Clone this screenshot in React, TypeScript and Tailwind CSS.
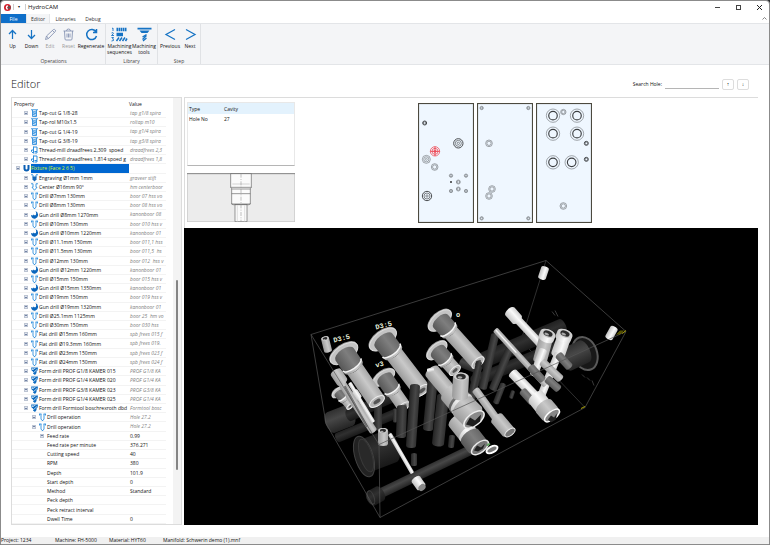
"use client";

import { useState } from "react";
import type { ReactNode } from "react";

type IconKind =
  | "tap"
  | "mill"
  | "fixture"
  | "engrave"
  | "center"
  | "drill"
  | "gun"
  | "form"
  | "none";

interface TreeRow {
  level: number;
  label: string;
  value: string;
  icon: IconKind;
  state?: "open" | "closed";
}

const op = (icon: IconKind, label: string, value: string): TreeRow => ({
  level: 1,
  icon,
  label,
  value,
  state: "closed",
});

const param = (label: string, value: string): TreeRow => ({
  level: 3,
  icon: "none",
  label,
  value,
});

const rows: TreeRow[] = [
  op("tap", "Tap-cut G 1/8-28", "tap g1/8 spira"),
  op("tap", "Tap-rol M10x1.5", "roltap m10"),
  op("tap", "Tap-cut G 1/4-19", "tap g1/4 spira"),
  op("tap", "Tap-cut G 3/8-19", "tap g3/8 spira"),
  op("mill", "Thread-mill draadfrees 2,309  spoed", "draadfrees 2,3"),
  op("mill", "Thread-mill draadfrees 1,814 spoed g", "draadfrees 1,8"),
  { level: 0, icon: "fixture", label: "Fixture (Face 2 6 5)", value: "", state: "open" },
  op("engrave", "Engraving Ø1mm 1mm", "graveer stift"),
  op("center", "Center Ø16mm 90°", "hm centerboor"),
  op("drill", "Drill Ø7mm 130mm", "boor 07 hss vo"),
  op("drill", "Drill Ø8mm 130mm", "boor 08 hss vo"),
  op("gun", "Gun drill Ø8mm 1270mm", "kanonboor 08"),
  op("drill", "Drill Ø10mm 130mm", "boor 010 hss v"),
  op("gun", "Gun drill Ø10mm 1220mm", "kanonboor 01"),
  op("drill", "Drill Ø11.1mm 150mm", "boor 011,1 hss"),
  op("drill", "Drill Ø11.5mm 130mm", "boor 011,5  hs"),
  op("drill", "Drill Ø12mm 130mm", "boor 012  hss v"),
  op("gun", "Gun drill Ø12mm 1220mm", "kanonboor 01"),
  op("drill", "Drill Ø15mm 150mm", "boor 015 hss v"),
  op("gun", "Gun drill Ø15mm 1350mm", "kanonboor 01"),
  op("drill", "Drill Ø19mm 150mm", "boor 019 hss v"),
  op("gun", "Gun drill Ø19mm 1320mm", "kanonboor 01"),
  op("drill", "Drill Ø25.1mm 1125mm", "boor 25  hm vo"),
  op("drill", "Drill Ø30mm 150mm", "boor 030 hss"),
  op("drill", "Flat drill Ø15mm 160mm", "spb frees 015 f"),
  op("drill", "Flat drill Ø19.3mm 160mm", "spb frees 019."),
  op("drill", "Flat drill Ø23mm 150mm", "spb frees 023 f"),
  op("drill", "Flat drill Ø24mm 150mm", "spb frees 024 f"),
  op("form", "Form drill PROF G1/8 KAMER 015", "PROF G1/8 KA"),
  op("form", "Form drill PROF G1/4 KAMER 020", "PROF G1/4 KA"),
  op("form", "Form drill PROF G3/8 KAMER 023", "PROF G3/8 KA"),
  op("form", "Form drill PROF G1/4 KAMER 025", "PROF G1/4 KA"),
  { level: 1, icon: "form", label: "Form drill Formtool boschrexroth dbd", value: "Formtool bosc", state: "open" },
  { level: 2, icon: "drill", label: "Drill operation", value: "Hole 27.2", state: "closed" },
  { level: 2, icon: "drill", label: "Drill operation", value: "Hole 27.2", state: "open" },
  { level: 3, icon: "none", label: "Feed rate", value: "0.99", state: "closed" },
  param("Feed rate per minute", "376.271"),
  param("Cutting speed", "40"),
  param("RPM", "380"),
  param("Depth", "101.9"),
  param("Start depth", "0"),
  param("Method", "Standard"),
  param("Peck depth", ""),
  param("Peck retract interval", ""),
  param("Dwell Time", "0"),
];

const indents = ["pl-[4px]", "pl-[12px]", "pl-[20px]", "pl-[28px]"];

function ToolIcon({ kind }: { kind: IconKind }) {
  if (kind === "none") return null;
  return (
    <svg viewBox="0 0 14 16" className="mr-px h-2 w-[7px] shrink-0" fill="none" stroke="#2f8fdc" strokeWidth="1.8">
      {kind === "drill" && <path d="M0 2h5M9 2h5M4 2v10l2 3h2l2-3V2M1 2v3M13 2v3" />}
      {kind === "tap" && (
        <>
          <path d="M0 1.5h14M3 2v13h8V2" />
          <path d="M3 5l8 2M3 8l8 2M3 11l8 2M10 4l-6 3M10 8l-6 4" strokeWidth="1.5" />
        </>
      )}
      {kind === "mill" && <path d="M5 1v14M5 2h7v9H7M12 11v3H7M1 11v-3h3M1 11l3 3" strokeWidth="2" />}
      {kind === "fixture" && <path d="M3 2v7a4 4 0 0 0 8 0V2" stroke="#0a5fb4" strokeWidth="4" />}
      {kind === "engrave" && (
        <>
          <path d="M0 1.5h4M10 1.5h4M4 2v5M10 2v5" />
          <path d="M3 5h8v6l-4 4-4-4z" fill="#1669b8" stroke="none" />
        </>
      )}
      {kind === "center" && <path d="M0 1.500h4v7H2l5 6 5-6h-2v-7h4" />}
      {kind === "gun" && (
        <path d="M9 0a8 8 0 0 1 5 8 7 7 0 0 1-13 4l-1-4 4 1 1-2 3 2c3-2 3-5 1-9z" fill="#0a66bd" stroke="none" />
      )}
      {kind === "form" && (
        <>
          <path d="M0 1h14l-1 6-2 2v3l-3 4-4-3V9L1 7z" fill="#0f6cc0" stroke="none" />
          <path d="M1 6l8-4M4 12l8-7M1 2l4 3" stroke="#fff" strokeWidth="1.3" />
        </>
      )}
    </svg>
  );
}

function PropertyTree() {
  const [selected, setSelected] = useState(6);

  return (
    <section className="flex w-[171px] shrink-0 border border-[#dcdcdc]">
      <table className="flex min-w-0 flex-1 flex-col">
        <thead className="block">
          <tr className="flex h-[11px] items-center text-left">
            <th className="w-[117px] pl-[2px] font-normal">Property</th>
            <th className="font-normal">Value</th>
          </tr>
        </thead>
        <tbody className="flex flex-1 flex-col">
          {rows.map((row, i) => (
            <tr key={i} className="flex min-h-[9px] flex-1 items-stretch" onClick={() => setSelected(i)}>
              <td className={`flex w-[117px] items-center overflow-hidden border-b border-[#f3f3f3] ${indents[row.level]}`}>
                {row.state ? (
                  <button
                    aria-label={row.state === "open" ? "Collapse" : "Expand"}
                    className="mr-[3px] flex h-1 w-1 shrink-0 items-center justify-center border border-[#bcc4d2] bg-[#dfe4ee]"
                  >
                    <span className="h-px w-[2px] bg-[#7283a5]" />
                  </button>
                ) : (
                  <span className="mr-[3px] w-1 shrink-0" />
                )}
                <ToolIcon kind={row.icon} />
                <span
                  className={
                    selected === i
                      ? "flex-1 self-stretch bg-[#0067d0] leading-[9px] whitespace-pre text-[#d2f52c]"
                      : "flex-1 whitespace-pre"
                  }
                >
                  {row.label}
                </span>
              </td>
              <td
                className={`min-w-0 flex-1 overflow-hidden border-b border-[#f3f3f3] pl-[1px] whitespace-pre ${
                  row.level === 3 ? "" : "text-[#808080] italic"
                }`}
              >
                {row.value}
              </td>
            </tr>
          ))}
        </tbody>
      </table>
      <div className="ml-[7px] flex w-2 flex-col items-center bg-[#f3f3f3]">
        <span className="h-[182px] shrink-0" />
        <span className="h-[190px] w-[2px] rounded bg-[#858585]" />
      </div>
    </section>
  );
}

interface RibbonItem {
  label: string;
  width: string;
  muted?: boolean;
  icon: ReactNode;
}

const operations: RibbonItem[] = [
  { label: "Up", width: "w-[19px]", icon: <path d="M13 22V5M6 12l7-7 7 7" /> },
  { label: "Down", width: "w-[19px]", icon: <path d="M13 4v17M6 14l7 7 7-7" /> },
  {
    label: "Edit",
    width: "w-[18px]",
    muted: true,
    icon: <path d="M3 23l2-7L19 3q2-1 3.500 1t0 3L9 21zM5 16l4 5M17 5l4 4" strokeWidth="1.800" />,
  },
  {
    label: "Reset",
    width: "w-[19px]",
    muted: true,
    icon: <path d="M3 6h20M9 6q0-4 4-4t4 4M5 6l1 16q0 2 2 2h10q2 0 2-2l1-16M10 11v8M13 11v8M16 11v8" strokeWidth="1.800" />,
  },
  {
    label: "Regenerate",
    width: "w-[26px]",
    icon: <path d="M22 8a10 10 0 1 0 1 8M23 2v7h-7" strokeWidth="3" />,
  },
];

const library: RibbonItem[] = [
  {
    label: "Machining sequences",
    width: "w-[25px]",
    icon: (
      <>
        <path d="M-2 1l2-1v6M-3 10q4-2 4 1l-4 4h5M-3 19h4l-2 3q3 0 2 3l-4 1" strokeWidth="1.8" />
        <path d="M7 3h21" strokeWidth="7" strokeDasharray="3 1" />
        <path d="M7 13h13" strokeWidth="7" />
        <path d="M7 26l5-7M13 26l5-7M19 26l5-7M25 26l3-5" strokeWidth="3" />
      </>
    ),
  },
  {
    label: "Machining tools",
    width: "w-[24px]",
    icon: (
      <>
        <path d="M-1 1h28" strokeWidth="3.500" />
        <path d="M3 5h20l-4 5H7z" fill="#1673c4" stroke="none" />
        <path d="M9 18l8-5M9 23l8-8M10 26l7-6" strokeWidth="2.5" />
      </>
    ),
  },
];

const steps: RibbonItem[] = [
  { label: "Previous", width: "w-[22px]", icon: <path d="M22 3L4 13l18 10" /> },
  { label: "Next", width: "w-[18px]", icon: <path d="M4 3l18 10L4 23" /> },
];

function RibbonGroup({ title, items }: { title: string; items: RibbonItem[] }) {
  return (
    <div className="flex flex-col justify-between border-r border-[#e0e2e5] px-[1px] pt-1">
      <div className="flex">
        {items.map((item) => (
          <button key={item.label} className={`flex flex-col items-center gap-[2px] ${item.width}`}>
            <svg
              viewBox="0 0 26 26"
              className="h-[13px] w-[13px] overflow-visible"
              fill="none"
              stroke={item.muted ? "#8794b3" : "#1673c4"}
              strokeWidth="2.5"
            >
              {item.icon}
            </svg>
            <span className={`text-center leading-[6px] ${item.muted ? "text-[#999]" : ""}`}>{item.label}</span>
          </button>
        ))}
      </div>
      <span className="text-center leading-[6px] text-[#444]">{title}</span>
    </div>
  );
}

interface Hole {
  x: number;
  y: number;
  r: number;
  kind?: "dark" | "big" | "red" | "dot";
}

const faces: Hole[][] = [
  [
    { x: 20, y: 60, r: 6, kind: "dark" },
    { x: 121, y: 121, r: 14, kind: "dark" },
    { x: 51, y: 145, r: 14, kind: "red" },
    { x: 25, y: 169, r: 12 },
    { x: 50, y: 192, r: 10 },
    { x: 27, y: 279, r: 14, kind: "dark" },
    { x: 99, y: 218, r: 5 },
    { x: 144, y: 218, r: 5 },
    { x: 99, y: 237, r: 3, kind: "dot" },
    { x: 121, y: 237, r: 6 },
    { x: 121, y: 258, r: 6 },
    { x: 99, y: 264, r: 5 },
    { x: 144, y: 264, r: 5 },
  ],
  [
    { x: 14, y: 15, r: 5 },
    { x: 154, y: 15, r: 5 },
    { x: 14, y: 346, r: 5 },
    { x: 154, y: 346, r: 5 },
    { x: 36, y: 121, r: 10 },
    { x: 45, y: 258, r: 10 },
    { x: 36, y: 279, r: 10 },
  ],
  [
    { x: 51, y: 38, r: 20, kind: "big" },
    { x: 123, y: 38, r: 20, kind: "big" },
    { x: 82, y: 27, r: 8 },
    { x: 51, y: 92, r: 20, kind: "big" },
    { x: 123, y: 92, r: 20, kind: "big" },
    { x: 151, y: 121, r: 6, kind: "dark" },
    { x: 151, y: 169, r: 6, kind: "dark" },
    { x: 51, y: 178, r: 20, kind: "big" },
    { x: 107, y: 178, r: 20, kind: "big" },
    { x: 82, y: 309, r: 10 },
  ],
];

function Face({ holes }: { holes: Hole[] }) {
  return (
    <svg viewBox="0 0 168 360" className="h-[120px] w-14" fill="none">
      <rect x="1.5" y="1.5" width="165" height="357" fill="#eff7ff" stroke="#4c4a3f" strokeWidth="3.500" />
      {holes.map((h, i) => {
        if (h.kind === "dot") return <circle key={i} cx={h.x} cy={h.y} r={h.r} fill="#333" />;
        const color = h.kind === "red" ? "#ee3340" : h.kind === "dark" ? "#4a4d50" : "#777c80";
        return (
          <g key={i} stroke={color} strokeWidth="1.8">
            <circle cx={h.x} cy={h.y} r={h.r} strokeWidth={h.kind === "dark" ? 3 : 2} />
            <circle cx={h.x} cy={h.y} r={h.r * 0.64} stroke={h.kind === "big" ? "#3c3f42" : color} strokeWidth={h.kind === "big" ? 3.5 : 2} />
            {h.r > 11 && h.kind !== "big" && <circle cx={h.x} cy={h.y} r={h.r * 0.25} />}
            {h.kind === "red" && (
              <path d={`M${h.x - 14} ${h.y}h28M${h.x} ${h.y - 14}v28`} strokeWidth="2.5" />
            )}
          </g>
        );
      })}
    </svg>
  );
}

function HoleProfile() {
  return (
    <svg viewBox="0 0 324 147" className="h-[49px] w-[108px]" fill="none" stroke="#555" strokeWidth="1.8">
      <rect x="1" y="1" width="322" height="145" fill="#ececec" stroke="#c4c4c4" strokeWidth="2" />
      <path d="M0 2h324" stroke="#888" strokeWidth="3" />
      <path d="M131 2h62v41l-3 4v46l-5 2h-46l-5-2V47l-3-4z" fill="#fbfbfb" />
      <path d="M144 95h36v51h-36z" fill="#fbfbfb" />
      <path d="M131 43h62M134 48h56M134 62h56M134 93h56" />
      <path d="M136 33h52" stroke="#bbb" />
      <path d="M162 2v144" stroke="#999" strokeDasharray="12 4 3 4" />
      <path d="M151 97v49M173 97v49" stroke="#ccc" />
    </svg>
  );
}

interface CylProps {
  from: [number, number];
  to: [number, number];
  r: number;
  tone?: "light" | "white" | "mid" | "dim" | "dark";
  cap?: boolean;
}

// Shaded tube running between two points, with an optional open end
function Cyl({ from, to, r, tone = "light", cap = false }: CylProps) {
  const dx = to[0] - from[0];
  const dy = to[1] - from[1];
  const len = Math.hypot(dx, dy);
  const angle = (Math.atan2(dy, dx) * 180) / Math.PI;
  const k = r * 0.5;
  return (
    <g transform={`translate(${from[0]} ${from[1]}) rotate(${angle})`}>
      <path
        d={`M0 ${-r}H${len}A${k} ${r} 0 0 1 ${len} ${r}H0A${k} ${r} 0 0 1 0 ${-r}z`}
        fill={`url(#tone-${tone})`}
      />
      {cap && (
        <>
          <ellipse cx={0} cy={0} rx={k} ry={r * 0.9} fill="#cfcfcf" />
          <ellipse cx={0} cy={0} rx={k * 0.7} ry={r * 0.6} fill="#2b2b2b" />
          <ellipse cx={1} cy={1} rx={k * 0.3} ry={r * 0.3} fill="#aaa" />
        </>
      )}
    </g>
  );
}

// Cavity with a wide flange, a collar, a bright ring and a long bore
function Cavity({ at, ring, end, r }: { at: [number, number]; ring: [number, number]; end: [number, number]; r: number }) {
  const dx = end[0] - at[0];
  const dy = end[1] - at[1];
  const deg = (Math.atan2(dy, dx) * 180) / Math.PI;
  const d = Math.hypot(ring[0] - at[0], ring[1] - at[1]);
  const len = Math.hypot(dx, dy);
  const big = r * 1.22;
  return (
    <g transform={`translate(${at[0]} ${at[1]}) rotate(${deg})`}>
      <ellipse cx="-1" cy="0" rx={r * 0.95} ry={r * 1.8} fill="#9b9b9b" />
      <ellipse cx="0" cy="0" rx={r * 0.9} ry={r * 1.75} fill="#c4c4c4" stroke="#dedede" />
      <path d={`M1 ${-big}H${d}A${r * 0.5} ${big} 0 0 1 ${d} ${big}H1A${r * 0.6} ${big} 0 0 1 1 ${-big}z`} fill="url(#tone-mid)" />
      <path
        d={`M${d} ${-big}A${r * 0.5} ${big} 0 0 1 ${d} ${big}h3A${r * 0.5} ${big} 0 0 0 ${d + 3} ${-big}z`}
        fill="url(#tone-light)"
      />
      <path d={`M${d + 3} ${-r}H${len}A${r * 0.5} ${r} 0 0 1 ${len} ${r}H${d + 3}A${r * 0.5} ${r} 0 0 0 ${d + 3} ${-r}z`} fill="url(#tone-light)" />
      <path d={`M${d} ${-big}A${r * 0.5} ${big} 0 0 1 ${d} ${big}`} fill="none" stroke="#f4f4f4" strokeWidth="1.5" />
      <ellipse cx={len} cy="0" rx={r * 0.45} ry={r * 0.95} fill="#b4b4b4" stroke="#ececec" strokeWidth="1" />
      <ellipse cx={len} cy="0" rx={r * 0.2} ry={r * 0.45} fill="#555" />
    </g>
  );
}

const tones: [string, string, string, string][] = [
  ["light", "#a8a8a8", "#c9c9c9", "#9a9a9a"],
  ["white", "#cfcfcf", "#fafafa", "#c2c2c2"],
  ["mid", "#686868", "#7e7e7e", "#585858"],
  ["dim", "#303030", "#474747", "#242424"],
  ["dark", "#202020", "#303030", "#181818"],
];

function Viewport() {
  return (
    <svg
      viewBox="184 228 574 296"
      preserveAspectRatio="xMidYMid meet"
      className="min-h-0 w-full flex-1 bg-black"
      role="img"
      aria-label="Manifold model"
    >
      <defs>
        {tones.map(([name, a, b, c]) => (
          <linearGradient key={name} id={`tone-${name}`} x1="0" y1="0" x2="0" y2="1">
            <stop offset="0" stopColor={a} />
            <stop offset="0.4" stopColor={b} />
            <stop offset="1" stopColor={c} />
          </linearGradient>
        ))}
      </defs>

      {/* hidden edges of the block */}
      <path d="M546 260L521 340L585 407" fill="none" stroke="#3b3b3b" strokeWidth="0.8" />

      {/* bores deep inside the block */}
      <Cyl from={[478, 362]} to={[562, 326]} r={8} tone="dark" />
      <Cyl from={[474, 381]} to={[556, 347]} r={6} tone="dark" />
      <Cyl from={[338, 437]} to={[396, 413]} r={5} tone="dark" />
      <Cyl from={[331, 422]} to={[349, 415]} r={11} tone="dim" />
      <Cyl from={[349, 415]} to={[392, 396]} r={6} tone="dark" />
      <Cyl from={[364, 456]} to={[390, 446]} r={17} tone="dark" />
      <ellipse cx="364" cy="456" rx="9" ry="21" fill="#222" stroke="#424242" transform="rotate(-17 364 456)" />
      <ellipse cx="366" cy="455" rx="6" ry="17" fill="#292929" stroke="#383838" transform="rotate(-17 366 455)" />
      <Cyl from={[374, 496]} to={[482, 444]} r={5} tone="dim" />
      <Cyl from={[371, 498]} to={[380, 493]} r={8} tone="dark" />
      <ellipse cx="371" cy="497" rx="3" ry="7" fill="none" stroke="#404040" transform="rotate(-20 371 497)" />
      <ellipse cx="585" cy="353" rx="12" ry="17" fill="#181818" stroke="#5a5a5a" strokeWidth="2" transform="rotate(-20 585 353)" />
      <Cyl from={[567, 359]} to={[584, 351]} r={12} tone="dim" />
      <Cyl from={[495, 335]} to={[483, 387]} r={4} tone="dim" />
      <Cyl from={[511, 345]} to={[493, 388]} r={4} tone="dim" />
      <Cyl from={[503, 384]} to={[496, 402]} r={3} tone="dim" />
      <Cyl from={[513, 391]} to={[511, 397]} r={2} tone="dim" />
      <Cyl from={[378, 404]} to={[378, 428]} r={4} tone="dim" />
      <Cyl from={[395, 409]} to={[395, 421]} r={2} tone="dim" />
      <Cyl from={[478, 367]} to={[471, 400]} r={4} tone="dim" />
      <Cyl from={[462, 362]} to={[475, 367]} r={5} tone="dim" />

      {/* left cavities */}
      <Cavity at={[338, 392]} ring={[342, 397]} end={[350, 406]} r={4} />
      <Cavity at={[384, 377]} ring={[392, 388]} end={[404, 406]} r={7} />
      <Cavity at={[383, 339]} ring={[391, 350]} end={[422, 390]} r={9} />
      <Cavity at={[344, 353]} ring={[352, 364]} end={[377, 401]} r={9} />
      <Cyl from={[402, 407]} to={[401, 435]} r={5} tone="dim" />
      <Cyl from={[415, 386]} to={[411, 445]} r={5} tone="dim" />
      <Cyl from={[433, 376]} to={[428, 428]} r={5} tone="dim" />
      <Cyl from={[443, 396]} to={[438, 443]} r={6} tone="dim" />
      <Cyl from={[452, 436]} to={[451, 446]} r={3} tone="dim" />
      <Cyl from={[414, 454]} to={[414, 464]} r={3} tone="dim" />
      <Cyl from={[340, 380]} to={[373, 430]} r={4} />
      <Cyl from={[336, 372]} to={[342, 381]} r={6} />
      <Cyl from={[345, 386]} to={[367, 426]} r={1} tone="mid" />
      <Cyl from={[350, 383]} to={[373, 421]} r={2} tone="white" />
      <Cyl from={[355, 391]} to={[359, 397]} r={3} tone="white" />

      {/* middle cavities */}
      <Cavity at={[437, 350]} ring={[444, 359]} end={[455, 370]} r={7} />
      <Cavity at={[440, 320]} ring={[447, 329]} end={[478, 362]} r={8} />
      <Cyl from={[479, 362]} to={[472, 392]} r={3} tone="dim" />
      <Cyl from={[476, 390]} to={[497, 419]} r={4} />
      <Cyl from={[497, 418]} to={[508, 431]} r={7} />
      <ellipse cx="510" cy="432" rx="3" ry="6" fill="#777" stroke="#eee" transform="rotate(52 510 432)" />
      <Cyl from={[457, 420]} to={[476, 444]} r={10} />
      <Cyl from={[467, 433]} to={[468, 434]} r={10} tone="white" />
      <Cyl from={[470, 436]} to={[477, 445]} r={11} tone="mid" />
      <ellipse cx="480" cy="447" rx="5" ry="10" fill="#777" stroke="#e8e8e8" strokeWidth="1.500" transform="rotate(52 480 447)" />
      <path d="M474 450l3-5 4 2 4-4-2 5-5 3z" fill="#222" />
      <Cyl from={[432, 371]} to={[452, 395]} r={8} />
      <Cyl from={[428, 370]} to={[433, 369]} r={2} tone="white" />
      <Cyl from={[451, 392]} to={[462, 405]} r={12} />
      <Cyl from={[459, 401]} to={[460, 402]} r={13} tone="mid" />
      <Cyl from={[461, 403]} to={[462, 404]} r={13} tone="white" />
      <Cyl from={[463, 406]} to={[472, 415]} r={13} />
      <ellipse cx="474" cy="419" rx="6" ry="12" fill="#8a8a8a" stroke="#eee" strokeWidth="1.500" transform="rotate(52 474 419)" />
      <path d="M466 424l4-7 5 3 6-6-1 7-7 5z" fill="#1c1c1c" />
      <Cyl from={[461, 376]} to={[460, 396]} r={8} cap />
      <ellipse cx="492" cy="449" rx="6" ry="3" fill="#777" stroke="#fff" strokeWidth="2" transform="rotate(-28 492 449)" />

      {/* right-hand bores */}
      <Cyl from={[510, 311]} to={[540, 343]} r={4} tone="white" />
      <Cyl from={[510, 311]} to={[517, 319]} r={6} tone="white" />
      <Cyl from={[513, 373]} to={[542, 403]} r={5} tone="white" />
      <Cyl from={[547, 334]} to={[540, 360]} r={7} tone="light" />
      <Cyl from={[543, 350]} to={[534, 374]} r={4} tone="white" />
      <Cyl from={[565, 334]} to={[558, 354]} r={7} tone="white" />
      <Cyl from={[558, 354]} to={[538, 403]} r={4} tone="white" />
      <Cyl from={[548, 333]} to={[546, 338]} r={8} tone="white" cap />
      <Cyl from={[565, 333]} to={[563, 338]} r={8} tone="white" cap />
      <Cyl from={[496, 330]} to={[545, 384]} r={3} tone="light" />
      <Cyl from={[496, 330]} to={[516, 352]} r={1} tone="white" />
      <Cyl from={[531, 367]} to={[542, 379]} r={4} tone="mid" />
      <Cyl from={[543, 362]} to={[560, 378]} r={4} tone="light" />
      <Cyl from={[559, 355]} to={[569, 366]} r={4} tone="mid" />
      <Cyl from={[548, 379]} to={[558, 388]} r={4} tone="mid" />
      <Cyl from={[523, 391]} to={[532, 401]} r={4} tone="mid" />
      <Cyl from={[536, 397]} to={[544, 407]} r={9} tone="white" />
      <Cyl from={[544, 406]} to={[550, 413]} r={10} tone="light" />
      <ellipse cx="552" cy="415" rx="4" ry="9" fill="#888" stroke="#fff" strokeWidth="1.500" transform="rotate(52 552 415)" />
      <path d="M548 419l3-4 3 2 3-4-1 6-5 3z" fill="#222" />

      {/* small pins */}
      <Cyl from={[325, 338]} to={[328, 350]} r={4} cap />
      <Cyl from={[545, 268]} to={[542, 277]} r={4} tone="white" />
      <Cyl from={[614, 328]} to={[609, 337]} r={4} tone="white" />
      <Cyl from={[383, 430]} to={[383, 443]} r={5} cap />
      <Cyl from={[390, 434]} to={[412, 472]} r={2} tone="white" />
      <Cyl from={[416, 479]} to={[421, 486]} r={5} tone="white" />
      <ellipse cx="422" cy="487" rx="3" ry="4" fill="#888" transform="rotate(50 422 487)" />

      {/* visible edges of the block */}
      <path
        d="M311 334L546 260L626 331L585 407L380 517L326 423L311 334L379 444L380 517M379 444L626 331"
        fill="none"
        stroke="#555"
        strokeWidth="0.7"
      />

      <g fontFamily="Liberation Mono, monospace" fontWeight="bold" fontSize="7" fill="#e6efdc">
        <text x="334" y="342" transform="rotate(-14 334 342)">D3:5</text>
        <text x="376" y="329" transform="rotate(-14 376 329)">D3:5</text>
        <text x="376" y="367" transform="rotate(-14 376 367)">v3</text>
        <text x="456" y="316">o</text>
      </g>
      <path d="M617 334l4-4M619 334l4-4M622 333l4-3" stroke="#a9a000" />
      <path d="M581 408l4-2" stroke="#a9a000" />
      <path d="M552 311l3 4M555 310l3 6M582 374l3 3M587 377l3 3M592 380l2 5" stroke="#3a3a3a" />
      <path d="M487 445l3-2" stroke="#5fa35f" strokeWidth="2" />
    </svg>
  );
}

function TitleBar() {
  return (
    <header className="flex h-3 shrink-0 items-center pl-[3px] text-[6px]">
      <svg viewBox="0 0 16 16" className="h-[7px] w-[7px]">
        <circle cx="8" cy="8" r="8" fill="#d3202c" />
        <path d="M9 3a5 5 0 1 0 0 10V10a2 2 0 1 1 0-4z" fill="#fff" />
        <path d="M9 5h6v6H9z" fill="#555" />
      </svg>
      <span className="ml-[2px] h-[6px] w-px bg-[#ccc]" />
      <button aria-label="Customize" className="ml-1 text-[4px] leading-[6px]">▾</button>
      <span className="ml-[5px] h-[6px] w-px bg-[#ccc]" />
      <h1 className="ml-[2px] leading-[8px]">HydroCAM</h1>
      <div className="ml-auto flex items-center gap-4 pr-[7px]">
        <button aria-label="Minimize" className="h-px w-[5px] bg-[#444]" />
        <button aria-label="Maximize" className="h-[5px] w-[5px] border border-[#444]" />
        <button aria-label="Close">
          <svg viewBox="0 0 10 10" className="h-[5px] w-[5px]" stroke="#222" strokeWidth="2">
            <path d="M0 0l10 10M10 0L0 10" />
          </svg>
        </button>
      </div>
    </header>
  );
}

export default function App() {
  const [hole, setHole] = useState("");

  return (
    <div className="h-screen bg-[#2f3133] font-['Open_Sans','Noto_Sans',sans-serif] text-[5px] leading-[8px] text-[#111]">
      <div className="flex h-full flex-col overflow-hidden rounded-t-[4px] border border-[#8b8b8b] bg-white">
        <TitleBar />

        <nav className="mt-px flex h-[9px] shrink-0 text-[#333]">
          <button className="w-[25px] bg-[#0f6fc9] text-white">File</button>
          <button className="w-[24px] border-x border-[#e3e5e8] bg-[#f4f5f7]">Editor</button>
          <button className="w-[31px]">Libraries</button>
          <button className="w-[24px]">Debug</button>
          <button aria-label="Collapse ribbon" className="mr-[2px] ml-auto">
            <svg viewBox="0 0 10 6" className="h-[3px] w-[5px]" fill="none" stroke="#777" strokeWidth="1.800">
              <path d="M1 5l4-4 4 4" />
            </svg>
          </button>
        </nav>

        <div className="flex h-[42px] shrink-0 border-y border-[#e3e5e8] bg-[#f4f5f7] pl-px">
          <RibbonGroup title="Operations" items={operations} />
          <RibbonGroup title="Library" items={library} />
          <RibbonGroup title="Step" items={steps} />
        </div>

        <div className="flex h-8 shrink-0 items-center pt-[7px] pr-5 pb-px pl-[10px]">
          <h2 className="text-[11px] leading-[14px] font-light">Editor</h2>
          <label htmlFor="hole" className="mr-[3px] ml-auto">Search Hole:</label>
          <input
            id="hole"
            value={hole}
            onChange={(e) => setHole(e.target.value)}
            className="h-[10px] w-[54px] border-b border-[#b5b5b5] outline-none"
          />
          <button aria-label="Previous hole" className="ml-[3px] h-[11px] w-[12px] rounded-[2px] border border-[#ddd] font-bold">↑</button>
          <button aria-label="Next hole" className="ml-[3px] h-[11px] w-[12px] rounded-[2px] border border-[#ddd] font-bold">↓</button>
        </div>

        <main className="flex min-h-0 flex-1 gap-[2px] pr-[11px] pb-[12px] pl-[10px]">
          <PropertyTree />
          <section className="flex min-w-0 flex-1 flex-col border-t border-[#dcdcdc]">
            <div className="flex h-[130px] shrink-0 border-l border-[#dcdcdc] pt-1 pl-[2px]">
              <div className="flex w-[108px] flex-col gap-[7px]">
                <div className="h-16 border border-[#e8e8e8] border-b-[#b5b5b5]">
                  <table className="w-full table-fixed text-left">
                    <thead>
                      <tr className="h-[11px] bg-[#e3f2fd]">
                        <th className="w-9 pl-[1px] font-normal">Type</th>
                        <th className="font-normal">Cavity</th>
                      </tr>
                    </thead>
                    <tbody>
                      <tr className="h-[10px]">
                        <td className="pl-[1px]">Hole No</td>
                        <td>27</td>
                      </tr>
                    </tbody>
                  </table>
                </div>
                <HoleProfile />
              </div>
              <div className="ml-[123px] flex gap-[3px] pt-[1px]">
                {faces.map((holes, i) => (
                  <Face key={i} holes={holes} />
                ))}
              </div>
            </div>
            <Viewport />
          </section>
        </main>

        <footer className="flex h-[7px] shrink-0 items-center bg-[#f0f0f0] leading-[7px]">
          <span className="w-[54px]">Project: 1234</span>
          <span className="w-[54px]">Machine: FH-5000</span>
          <span className="w-[54px]">Material: HYT60</span>
          <span>Manifold: Schwerin demo (1).mnf</span>
        </footer>
      </div>
    </div>
  );
}
